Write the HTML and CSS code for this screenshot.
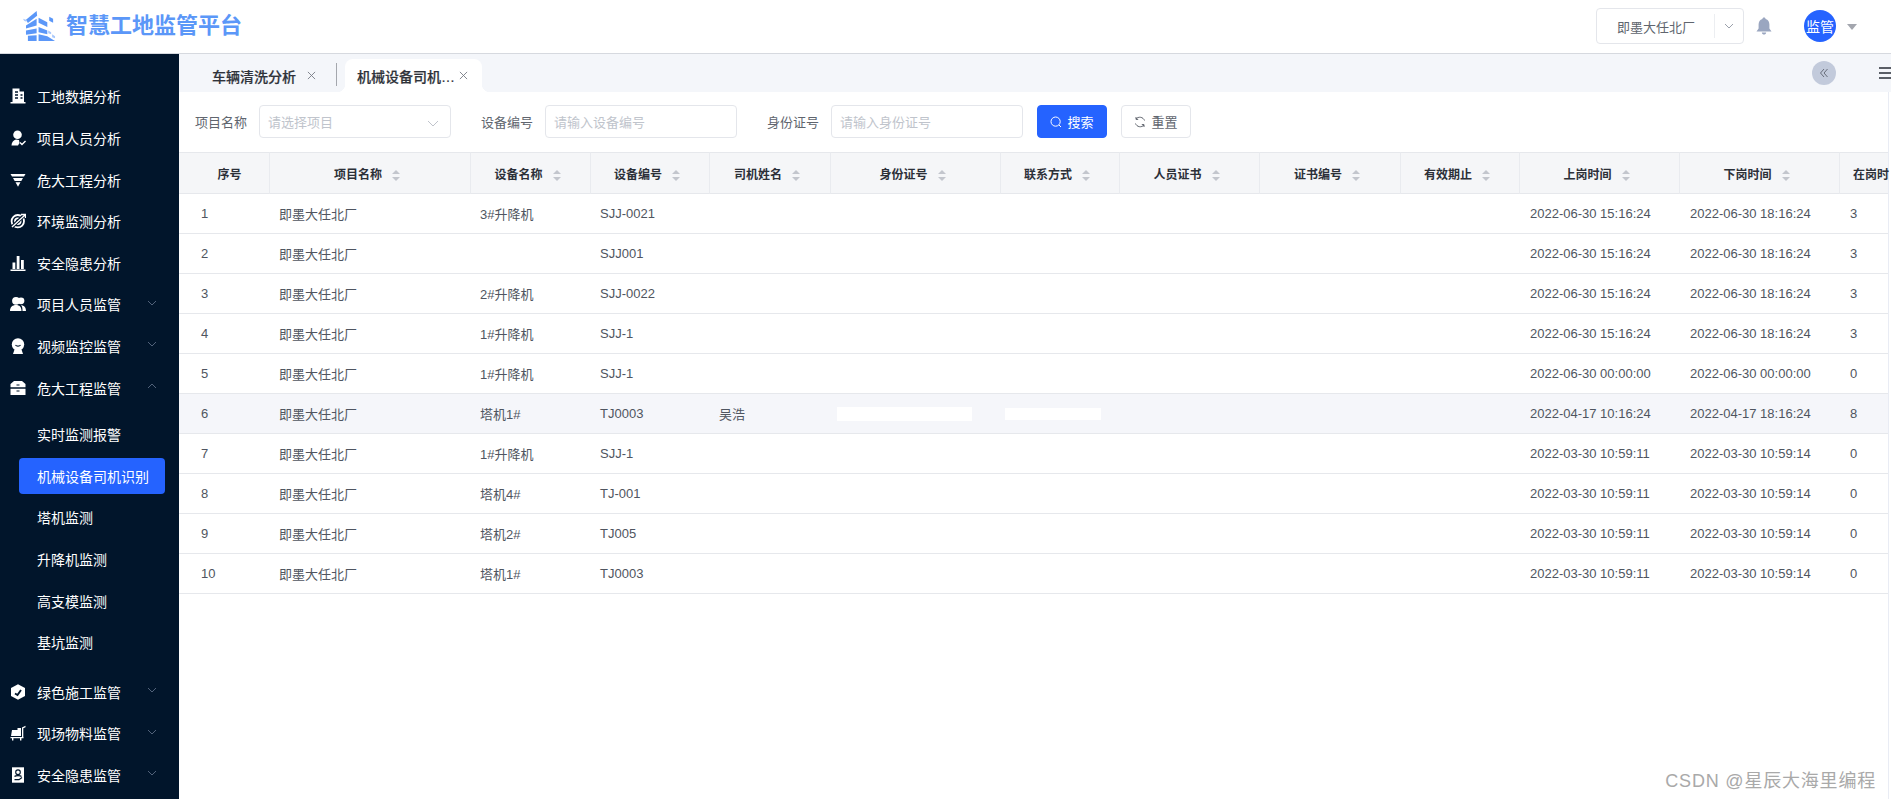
FILE: index.html
```html
<!DOCTYPE html>
<html lang="zh-CN">
<head>
<meta charset="utf-8">
<title>智慧工地监管平台</title>
<link rel="stylesheet" href="styles.css">
</head>
<body>
<header class="topbar">
  <div class="brand">
    <svg class="brand-logo" viewBox="0 0 36 32" aria-hidden="true">
      <path d="M3 9 L14 0 L14.5 5 L5 12.5 Z"/>
      <path class="logo-soft" d="M0 8 L3 9 L3.5 11 L1 10 Z"/>
      <path d="M16 7 L25 11.5 L25 16.5 L16 12 Z"/>
      <path d="M27 6 L31 8 L31 12 L27 10 Z"/>
      <path d="M3 20 L14 18 L14 23 L3 24.5 Z"/>
      <path d="M3 15 L14 8 L14 15 L3 18 Z"/>
      <path d="M16 16.5 L25 20 L25 24 L16 22 Z"/>
      <path d="M5 25.5 L14 25 L14 31 L5 31 Z"/>
      <path d="M16 24 L25 26 L33 31 L16 31 Z"/>
      <path class="logo-soft" d="M26 20 L29 22 L29 24 L26 23 Z M30 24 L33 26 L33 28 L30 27 Z"/>
    </svg>
    <span class="brand-name">智慧工地监管平台</span>
  </div>
  <div class="top-actions">
    <div class="site-select">
      <span class="site-name">即墨大任北厂</span>
      <span class="site-arrow">
        <svg class="chev-sm" viewBox="0 0 10 6"><path d="M1 1 L5 5 L9 1"/></svg>
      </span>
    </div>
    <svg class="bell" viewBox="0 0 16 18" aria-hidden="true">
      <path d="M8 0.5 C9 .5 9.6 1.2 9.6 2 C12.2 2.8 13.4 5 13.4 7.6 L13.4 11.5 L15.5 14.4 L0.5 14.4 L2.6 11.5 L2.6 7.6 C2.6 5 3.8 2.8 6.4 2 C6.4 1.2 7 .5 8 .5 Z"/>
      <path d="M5.8 15.4 L10.2 15.4 C10 16.8 9.1 17.5 8 17.5 C6.9 17.5 6 16.8 5.8 15.4 Z"/>
    </svg>
    <span class="avatar">监管</span>
    <span class="caret"></span>
  </div>
</header>

<div class="layout">
  <nav class="sidebar">
    <a class="nav-item"><svg class="ico" viewBox="0 0 16 16"><path d="M2.5 0.5 H9.5 V3.5 H14 V14 H15.5 V15.5 H0.5 V14 H2.5 Z"/><path class="cut" d="M5 4 H8 M5 7 H8 M5 10 H8 M10.5 7 H12.5 M10.5 10 H12.5"/></svg><span>工地数据分析</span></a>
    <a class="nav-item"><svg class="ico" viewBox="0 0 16 16"><circle cx="7.5" cy="4.7" r="4.3"/><path d="M1.5 15.5 C1.5 12 3.5 9.8 6 9.4 L9 10 L9.5 13 L8 15.5 Z"/><path class="tick" d="M10 12.5 L12 14.5 L15.5 11"/></svg><span>项目人员分析</span></a>
    <a class="nav-item"><svg class="ico" viewBox="0 0 16 16"><path d="M0.5 2 H15.5 L14 4.6 H2 Z M3 6 H13 L11.3 9 H4.7 Z M5.5 10.3 H10.5 L8 14.8 Z"/></svg><span>危大工程分析</span></a>
    <a class="nav-item"><svg class="ico" viewBox="0 0 16 16"><circle class="ring" cx="7.8" cy="8.2" r="6.2"/><circle class="ring" cx="7.8" cy="8.2" r="2.8"/><path class="slash" d="M1 15 L15 1.5"/><path class="tick" d="M2 14 L15 2 M11 1.5 H15.5 V5"/></svg><span>环境监测分析</span></a>
    <a class="nav-item"><svg class="ico" viewBox="0 0 16 16"><path d="M2.5 7.5 H5.3 V14 H2.5 Z M6.7 1 H9.5 V14 H6.7 Z M11 5 H13.8 V14 H11 Z M0.5 14.5 H15.5 V16 H0.5 Z"/></svg><span>安全隐患分析</span></a>
    <a class="nav-item"><svg class="ico" viewBox="0 0 16 16"><circle cx="6" cy="4.8" r="3.9"/><circle cx="11" cy="4.8" r="3.4"/><path d="M0 15 C0 11 2.5 9 6 9 C9.5 9 11.5 11 11.5 15 Z M12.5 15 C12.5 12.5 12.3 10.5 11 9.2 C14 9.3 16 11 16 15 Z"/></svg><span>项目人员监管</span><svg class="chev" viewBox="0 0 10 6"><path d="M1 1 L5 5 L9 1"/></svg></a>
    <a class="nav-item"><svg class="ico" viewBox="0 0 16 16"><circle cx="8" cy="6.5" r="6.2"/><path d="M3 16 H13 L11.5 11.5 H4.5 Z"/><path class="hole-bar" d="M5.5 7 C6.5 8.5 9.5 8.5 10.5 7"/></svg><span>视频监控监管</span><svg class="chev" viewBox="0 0 10 6"><path d="M1 1 L5 5 L9 1"/></svg></a>
    <a class="nav-item"><svg class="ico" viewBox="0 0 16 16"><path d="M4 1 H12 L15.5 4 V7.3 H0.5 V4 Z M0.5 8.8 H15.5 V15 H0.5 Z"/><path class="hole-bar" d="M6.5 5 H9.5 M6.5 11 H9.5"/></svg><span>危大工程监管</span><svg class="chev" viewBox="0 0 10 6"><path d="M1 5 L5 1 L9 5"/></svg></a>
    <div class="submenu">
      <a class="sub-item">实时监测报警</a>
      <a class="sub-item is-active">机械设备司机识别</a>
      <a class="sub-item">塔机监测</a>
      <a class="sub-item">升降机监测</a>
      <a class="sub-item">高支模监测</a>
      <a class="sub-item">基坑监测</a>
    </div>
    <a class="nav-item"><svg class="ico" viewBox="0 0 16 16"><path d="M8 0.3 L15 4 V12 L8 15.7 L1 12 V4 Z"/><path class="tick-dark" d="M5 9.5 L7.5 11 L11 6"/></svg><span>绿色施工监管</span><svg class="chev" viewBox="0 0 10 6"><path d="M1 1 L5 5 L9 1"/></svg></a>
    <a class="nav-item"><svg class="ico" viewBox="0 0 16 16"><path d="M2 5 H7.5 V3 H11 V11 H1 Z M12 12 V2.5 L15.5 0.8 V2.3 L13.3 3.3 V12 Z M0.5 12 H13.5 V13.2 H0.5 Z M2 13 H3.4 V15.5 H2 Z M10 13 H11.4 V15.5 H10 Z"/></svg><span>现场物料监管</span><svg class="chev" viewBox="0 0 10 6"><path d="M1 1 L5 5 L9 1"/></svg></a>
    <a class="nav-item"><svg class="ico" viewBox="0 0 16 16"><path d="M2 0.3 H14 V15.7 H2 Z"/><circle class="hole-ring" cx="8" cy="5.2" r="2.3"/><path class="hole-bar" d="M4.5 9.5 C5.5 8.3 10.5 8.3 11.5 9.5 M4.5 12.7 H9 L12 10.5"/></svg><span>安全隐患监管</span><svg class="chev" viewBox="0 0 10 6"><path d="M1 1 L5 5 L9 1"/></svg></a>
  </nav>

  <main class="content">
    <div class="tabs">
      <div class="tab">
        <span>车辆清洗分析</span>
        <svg class="tab-x" viewBox="0 0 10 10"><path d="M1 1 L9 9 M9 1 L1 9"/></svg>
      </div>
      <span class="tab-sep"></span>
      <div class="tab tab-active">
        <span class="tab-label">机械设备司机…</span>
        <svg class="tab-x" viewBox="0 0 10 10"><path d="M1 1 L9 9 M9 1 L1 9"/></svg>
      </div>
      <div class="tabs-tools">
        <span class="collapse">
          <svg viewBox="0 0 10 10"><path d="M5 1 L1.5 5 L5 9 M8.5 1 L5 5 L8.5 9"/></svg>
        </span>
        <span class="menu-lines"><i></i><i></i><i></i></span>
      </div>
    </div>

    <div class="page">
      <form class="filters">
        <label class="f-label">项目名称</label>
        <div class="f-input f-select"><span>请选择项目</span><svg class="f-chev" viewBox="0 0 12 7"><path d="M1 1 L6 6 L11 1"/></svg></div>
        <label class="f-label f-next">设备编号</label>
        <div class="f-input"><span>请输入设备编号</span></div>
        <label class="f-label f-next">身份证号</label>
        <div class="f-input"><span>请输入身份证号</span></div>
        <button type="button" class="btn btn-primary"><svg class="btn-ico" viewBox="0 0 12 12"><circle cx="5.6" cy="5.6" r="4.6"/><path d="M9 9 L11 11"/></svg>搜索</button>
        <button type="button" class="btn btn-plain"><svg class="btn-ico" viewBox="0 0 12 12"><path d="M10.5 4.5 A5 5 0 0 0 2 3 M1.5 7.5 A5 5 0 0 0 10 9"/><path d="M2 1 V3.4 H4.2 M10 11 V8.6 H7.8"/></svg>重置</button>
      </form>

      <div class="table-wrap">
        <table class="grid">
          <colgroup>
            <col class="c90"><col class="c201"><col class="c120"><col class="c119"><col class="c121"><col class="c170"><col class="c119"><col class="c140"><col class="c141"><col class="c119"><col class="c160"><col class="c160"><col class="c49">
          </colgroup>
          <thead>
            <tr>
              <th class="th-first">序号</th>
              <th>项目名称<svg class="sort" viewBox="0 0 8 11"><path d="M4 0 L8 4 H0 Z M0 7 H8 L4 11 Z"/></svg></th>
              <th>设备名称<svg class="sort" viewBox="0 0 8 11"><path d="M4 0 L8 4 H0 Z M0 7 H8 L4 11 Z"/></svg></th>
              <th>设备编号<svg class="sort" viewBox="0 0 8 11"><path d="M4 0 L8 4 H0 Z M0 7 H8 L4 11 Z"/></svg></th>
              <th>司机姓名<svg class="sort" viewBox="0 0 8 11"><path d="M4 0 L8 4 H0 Z M0 7 H8 L4 11 Z"/></svg></th>
              <th>身份证号<svg class="sort" viewBox="0 0 8 11"><path d="M4 0 L8 4 H0 Z M0 7 H8 L4 11 Z"/></svg></th>
              <th>联系方式<svg class="sort" viewBox="0 0 8 11"><path d="M4 0 L8 4 H0 Z M0 7 H8 L4 11 Z"/></svg></th>
              <th>人员证书<svg class="sort" viewBox="0 0 8 11"><path d="M4 0 L8 4 H0 Z M0 7 H8 L4 11 Z"/></svg></th>
              <th>证书编号<svg class="sort" viewBox="0 0 8 11"><path d="M4 0 L8 4 H0 Z M0 7 H8 L4 11 Z"/></svg></th>
              <th>有效期止<svg class="sort" viewBox="0 0 8 11"><path d="M4 0 L8 4 H0 Z M0 7 H8 L4 11 Z"/></svg></th>
              <th>上岗时间<svg class="sort" viewBox="0 0 8 11"><path d="M4 0 L8 4 H0 Z M0 7 H8 L4 11 Z"/></svg></th>
              <th>下岗时间<svg class="sort" viewBox="0 0 8 11"><path d="M4 0 L8 4 H0 Z M0 7 H8 L4 11 Z"/></svg></th>
              <th class="th-last">在岗时</th>
            </tr>
          </thead>
          <tbody>
            <tr><td>1</td><td>即墨大任北厂</td><td>3#升降机</td><td>SJJ-0021</td><td></td><td></td><td></td><td></td><td></td><td></td><td>2022-06-30 15:16:24</td><td>2022-06-30 18:16:24</td><td>3</td></tr>
            <tr><td>2</td><td>即墨大任北厂</td><td></td><td>SJJ001</td><td></td><td></td><td></td><td></td><td></td><td></td><td>2022-06-30 15:16:24</td><td>2022-06-30 18:16:24</td><td>3</td></tr>
            <tr><td>3</td><td>即墨大任北厂</td><td>2#升降机</td><td>SJJ-0022</td><td></td><td></td><td></td><td></td><td></td><td></td><td>2022-06-30 15:16:24</td><td>2022-06-30 18:16:24</td><td>3</td></tr>
            <tr><td>4</td><td>即墨大任北厂</td><td>1#升降机</td><td>SJJ-1</td><td></td><td></td><td></td><td></td><td></td><td></td><td>2022-06-30 15:16:24</td><td>2022-06-30 18:16:24</td><td>3</td></tr>
            <tr><td>5</td><td>即墨大任北厂</td><td>1#升降机</td><td>SJJ-1</td><td></td><td></td><td></td><td></td><td></td><td></td><td>2022-06-30 00:00:00</td><td>2022-06-30 00:00:00</td><td>0</td></tr>
            <tr class="row-hover"><td>6</td><td>即墨大任北厂</td><td>塔机1#</td><td>TJ0003</td><td>吴浩</td><td><span class="mask mask-id"></span></td><td><span class="mask mask-tel"></span></td><td></td><td></td><td></td><td>2022-04-17 10:16:24</td><td>2022-04-17 18:16:24</td><td>8</td></tr>
            <tr><td>7</td><td>即墨大任北厂</td><td>1#升降机</td><td>SJJ-1</td><td></td><td></td><td></td><td></td><td></td><td></td><td>2022-03-30 10:59:11</td><td>2022-03-30 10:59:14</td><td>0</td></tr>
            <tr><td>8</td><td>即墨大任北厂</td><td>塔机4#</td><td>TJ-001</td><td></td><td></td><td></td><td></td><td></td><td></td><td>2022-03-30 10:59:11</td><td>2022-03-30 10:59:14</td><td>0</td></tr>
            <tr><td>9</td><td>即墨大任北厂</td><td>塔机2#</td><td>TJ005</td><td></td><td></td><td></td><td></td><td></td><td></td><td>2022-03-30 10:59:11</td><td>2022-03-30 10:59:14</td><td>0</td></tr>
            <tr><td>10</td><td>即墨大任北厂</td><td>塔机1#</td><td>TJ0003</td><td></td><td></td><td></td><td></td><td></td><td></td><td>2022-03-30 10:59:11</td><td>2022-03-30 10:59:14</td><td>0</td></tr>
          </tbody>
        </table>
      </div>
    </div>
  </main>
</div>
<div class="watermark">CSDN @星辰大海里编程</div>
</body>
</html>
```

FILE: styles.css
```css
* { box-sizing: border-box; }
html, body { margin: 0; height: 100%; }
body {
  display: flex;
  flex-direction: column;
  height: 799px;
  overflow: hidden;
  background: #fff;
  font-family: "Liberation Sans", "Noto Sans CJK SC", sans-serif;
  font-size: 13px;
  color: #4f5560;
}

/* top bar */
.topbar {
  flex: none;
  height: 54px;
  display: flex;
  align-items: center;
  justify-content: space-between;
  padding: 0 0 1px 23px;
  background: #fff;
  border-bottom: 1px solid #d6d9df;
}
.brand { display: flex; align-items: center; gap: 8px; }
.brand-logo { width: 35px; height: 31px; fill: #5b97f8; }
.brand-logo .logo-soft { fill: #a9c8fb; }
.brand-name { font-size: 22px; font-weight: 700; color: #5b97f8; line-height: 32px; }
.top-actions { display: flex; align-items: center; padding-right: 34px; }
.site-select {
  width: 148px;
  height: 36px;
  display: flex;
  align-items: center;
  border: 1px solid #e4e6eb;
  border-radius: 4px;
  color: #60656e;
}
.site-name { flex: 1; padding-left: 20px; }
.site-arrow {
  width: 29px;
  height: 24px;
  display: flex;
  align-items: center;
  justify-content: center;
  border-left: 1px solid #eceef1;
}
.chev-sm { width: 10px; height: 6px; fill: none; stroke: #9aa0ab; stroke-width: 1; }
.bell { width: 16px; height: 18px; margin-left: 12px; fill: #9aa6c0; }
.avatar {
  width: 32px;
  height: 32px;
  margin-left: 32px;
  display: flex;
  align-items: center;
  justify-content: center;
  border-radius: 50%;
  background: #2563ff;
  color: #fff;
  font-size: 14px;
}
.caret {
  width: 0;
  height: 0;
  margin: 2px 0 0 11px;
  border-left: 5px solid transparent;
  border-right: 5px solid transparent;
  border-top: 6px solid #a3a6ae;
}

/* frame */
.layout { flex: 1; min-height: 0; display: flex; }
.sidebar {
  flex: none;
  width: 179px;
  padding-top: 21.6px;
  background: #01152b;
  color: #fff;
  font-size: 14px;
}
.nav-item {
  height: 41.6px;
  display: flex;
  align-items: center;
  padding-left: 10px;
  position: relative;
}
.ico { width: 16px; height: 16px; margin-right: 11px; flex: none; fill: #fff; stroke: none; }
.ico .cut { fill: none; stroke: #01152b; stroke-width: 1.4; }
.ico .tick { fill: none; stroke: #fff; stroke-width: 1.4; }
.ico .slash { fill: none; stroke: #01152b; stroke-width: 3.4; }
.ico .ring { fill: none; stroke: #fff; stroke-width: 1.8; }
.ico .hole-ring { fill: none; stroke: #01152b; stroke-width: 1.1; }
.ico .hole-bar { fill: none; stroke: #01152b; stroke-width: 1.2; }
.ico .tick-dark { fill: none; stroke: #01152b; stroke-width: 1.9; }
.chev {
  width: 10px;
  height: 6px;
  margin-left: 26px;
  margin-top: -3px;
  fill: none;
  stroke: #52627a;
  stroke-width: 1;
}
.submenu { padding: 5px 0 8px; }
.sub-item {
  height: 41.6px;
  display: flex;
  align-items: center;
  padding-left: 37px;
  position: relative;
}
.sub-item.is-active { z-index: 0; }
.sub-item.is-active::before {
  content: "";
  position: absolute;
  z-index: -1;
  left: 19px;
  top: 3px;
  width: 146px;
  height: 36px;
  border-radius: 4px;
  background: #2563ff;
}

.content { flex: 1; min-width: 0; display: flex; flex-direction: column; }

/* tabs */
.tabs {
  flex: none;
  height: 38px;
  display: flex;
  align-items: flex-end;
  background: #f4f6fa;
  color: #2f333a;
  font-size: 14px;
  font-weight: 500;
}
.tab {
  height: 33px;
  display: flex;
  align-items: center;
  padding-left: 33px;
}
.tab > span { -webkit-text-stroke: 0.2px #2f333a; }
.tab-x { width: 9px; height: 9px; margin-left: 11px; fill: none; stroke: #777c85; stroke-width: 1; }
.tab-sep { width: 1px; height: 23px; margin: 0 8px 6px 20px; background: #a4a7ad; }
.tab-active {
  position: relative;
  width: 137px;
  padding-left: 12px;
  background: #fff;
  border-radius: 8px 8px 0 0;
}
.tab-active::before, .tab-active::after {
  content: "";
  position: absolute;
  bottom: 0;
  width: 8px;
  height: 8px;
}
.tab-active::before { left: -8px; background: radial-gradient(circle at 0 0, #f4f6fa 8px, #fff 8.5px); }
.tab-active::after { right: -8px; background: radial-gradient(circle at 100% 0, #f4f6fa 8px, #fff 8.5px); }
.tab-label { width: 98px; white-space: nowrap; }
.tab-active .tab-x { margin-left: 4px; }
.tabs-tools {
  flex: 1;
  align-self: stretch;
  display: flex;
  align-items: center;
  justify-content: flex-end;
  padding-top: 1px;
  padding-bottom: 1px;
}
.collapse {
  width: 24px;
  height: 24px;
  display: flex;
  align-items: center;
  justify-content: center;
  border-radius: 50%;
  background: #c2cadb;
}
.collapse svg { width: 10px; height: 10px; fill: none; stroke: #676d7a; stroke-width: 1; }
.menu-lines { width: 12px; margin-left: 43px; display: flex; flex-direction: column; gap: 3px; }
.menu-lines i { display: block; height: 2px; background: #5a5e66; }

/* page */
.page { flex: 1; min-height: 0; display: flex; flex-direction: column; margin-right: 2px; border-right: 1px solid #e9ecf4; }
.filters { flex: none; display: flex; align-items: center; height: 60px; padding: 0 0 1px 16px; }
.f-label { width: 52px; margin-right: 12px; color: #60656e; white-space: nowrap; }
.f-next { margin-left: 30px; }
.f-input {
  width: 192px;
  height: 33px;
  display: flex;
  align-items: center;
  justify-content: space-between;
  padding: 0 8px;
  border: 1px solid #e4e6eb;
  border-radius: 4px;
  color: #c0c4cc;
}
.f-chev { width: 12px; height: 7px; margin-right: 3px; margin-top: 3px; fill: none; stroke: #c0c4cc; stroke-width: 1; }
.btn {
  width: 70px;
  height: 33px;
  margin-left: 14px;
  display: flex;
  align-items: center;
  justify-content: center;
  gap: 5px;
  padding: 0;
  border-radius: 4px;
  font: inherit;
}
.btn-primary { background: #2563ff; border: 1px solid #2563ff; color: #fff; }
.btn-plain { background: #fff; border: 1px solid #e4e6eb; color: #60656e; }
.btn-ico { width: 12px; height: 12px; fill: none; stroke: currentColor; stroke-width: 1; }

/* table */
.table-wrap { flex: 1; min-height: 0; }
.grid { table-layout: fixed; width: 1709px; border-collapse: separate; border-spacing: 0; }
.c90 { width: 90px; }
.c119 { width: 119px; }
.c120 { width: 120px; }
.c121 { width: 121px; }
.c140 { width: 140px; }
.c141 { width: 141px; }
.c160 { width: 160px; }
.c170 { width: 170px; }
.c201 { width: 201px; }
.c49 { width: 49px; }
.grid th {
  height: 42px;
  padding: 0 6px 0 0;
  background: #f5f6f8;
  border-top: 1px solid #e6e8ec;
  border-bottom: 1px solid #e6e8ec;
  border-left: 1px solid #e9ebef;
  color: #2c3038;
  font-size: 12px;
  font-weight: 700;
  text-align: center;
  white-space: nowrap;
}
.grid th.th-first { padding: 0 0 0 11px; border-left: 0; }
.grid th.th-last { padding: 0 0 0 13px; text-align: left; }
.sort { width: 8px; height: 11px; margin-left: 10px; vertical-align: -2px; fill: #c3c6cd; }
.grid td {
  height: 40px;
  padding: 0 10px;
  border-bottom: 1px solid #e6e8ec;
  color: #4f5560;
  white-space: nowrap;
}
.grid td:first-child { padding-left: 22px; }
.grid td:nth-child(n+11) { padding-left: 11px; padding-right: 0; }
.row-hover td { background: #f5f6fa; }
.mask { display: block; background: #fff; }
.mask-id { width: 135px; height: 14px; margin-left: -3px; }
.mask-tel { width: 96px; height: 12px; margin-left: -5px; }

.watermark {
  position: absolute;
  right: 15px;
  bottom: 7px;
  color: #a9a9a9;
  font-size: 18px;
  letter-spacing: 0.8px;
  line-height: 22px;
}
```
